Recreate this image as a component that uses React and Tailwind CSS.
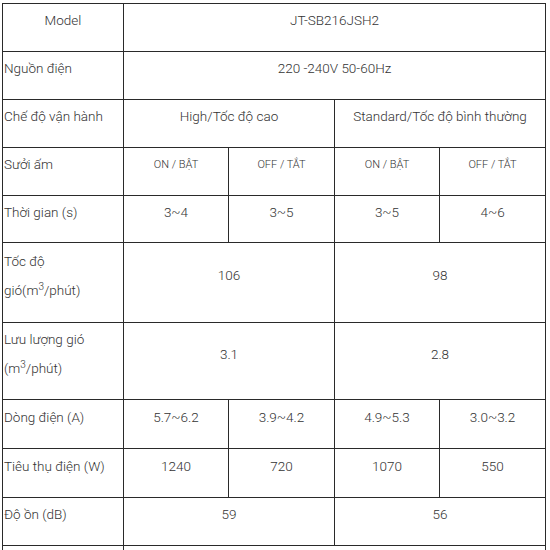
import React from 'react';

const cell = "border border-[#2a2a2a] p-0 pb-[14px] align-middle text-center";
const label = "border border-[#2a2a2a] p-0 pb-[14px] pl-[1px] align-middle text-left";

function App() {
    return (
        <div className="w-[550px] h-[550px] overflow-hidden bg-white pt-[3px] pl-[2px]" style={{ fontFamily: 'Roboto, "Liberation Sans", sans-serif' }}>
            <table className="border-collapse table-fixed w-[544px] text-[13.5px] leading-[29px] text-[#333] font-light">
                <colgroup>
                    <col className="w-[121px]" />
                    <col className="w-[105px]" />
                    <col className="w-[106px]" />
                    <col className="w-[105px]" />
                    <col className="w-[106px]" />
                </colgroup>
                <tbody>
                    <tr className="h-[48px]">
                        <td className={cell}>Model</td>
                        <td className={cell} colSpan={4}>JT-SB216JSH2</td>
                    </tr>
                    <tr className="h-[48px]">
                        <td className={label}>Nguồn điện</td>
                        <td className={cell} colSpan={4}>220 -240V 50-60Hz</td>
                    </tr>
                    <tr className="h-[48px]">
                        <td className={label}>Chế độ vận hành</td>
                        <td className={cell} colSpan={2}>High/Tốc độ cao</td>
                        <td className={cell} colSpan={2}>Standard/Tốc độ bình thường</td>
                    </tr>
                    <tr className="h-[48px]">
                        <td className={label}>Sưởi ấm</td>
                        <td className={cell + " text-[11px]"}>ON / BẬT</td>
                        <td className={cell + " text-[11px]"}>OFF / TẮT</td>
                        <td className={cell + " text-[11px]"}>ON / BẬT</td>
                        <td className={cell + " text-[11px]"}>OFF / TẮT</td>
                    </tr>
                    <tr className="h-[47px]">
                        <td className={label}>Thời gian (s)</td>
                        <td className={cell}>3~4</td>
                        <td className={cell}>3~5</td>
                        <td className={cell}>3~5</td>
                        <td className={cell}>4~6</td>
                    </tr>
                    <tr className="h-[80px]">
                        <td className={label}>Tốc độ<br />gió(m<sup className="text-[10px]">3</sup>/phút)</td>
                        <td className={cell} colSpan={2}>106</td>
                        <td className={cell} colSpan={2}>98</td>
                    </tr>
                    <tr className="h-[77px]">
                        <td className={label}>Lưu lượng gió<br />(m<sup className="text-[10px]">3</sup>/phút)</td>
                        <td className={cell} colSpan={2}>3.1</td>
                        <td className={cell} colSpan={2}>2.8</td>
                    </tr>
                    <tr className="h-[49px]">
                        <td className={label}>Dòng điện (A)</td>
                        <td className={cell}>5.7~6.2</td>
                        <td className={cell}>3.9~4.2</td>
                        <td className={cell}>4.9~5.3</td>
                        <td className={cell}>3.0~3.2</td>
                    </tr>
                    <tr className="h-[49px]">
                        <td className={label}>Tiêu thụ điện (W)</td>
                        <td className={cell}>1240</td>
                        <td className={cell}>720</td>
                        <td className={cell}>1070</td>
                        <td className={cell}>550</td>
                    </tr>
                    <tr className="h-[48px]">
                        <td className={label}>Độ ồn (dB)</td>
                        <td className={cell} colSpan={2}>59</td>
                        <td className={cell} colSpan={2}>56</td>
                    </tr>
                    <tr className="h-[48px]">
                        <td className={label}>&nbsp;</td>
                        <td className={cell} colSpan={4}>&nbsp;</td>
                    </tr>
                </tbody>
            </table>
        </div>
    );
}

export default App;
